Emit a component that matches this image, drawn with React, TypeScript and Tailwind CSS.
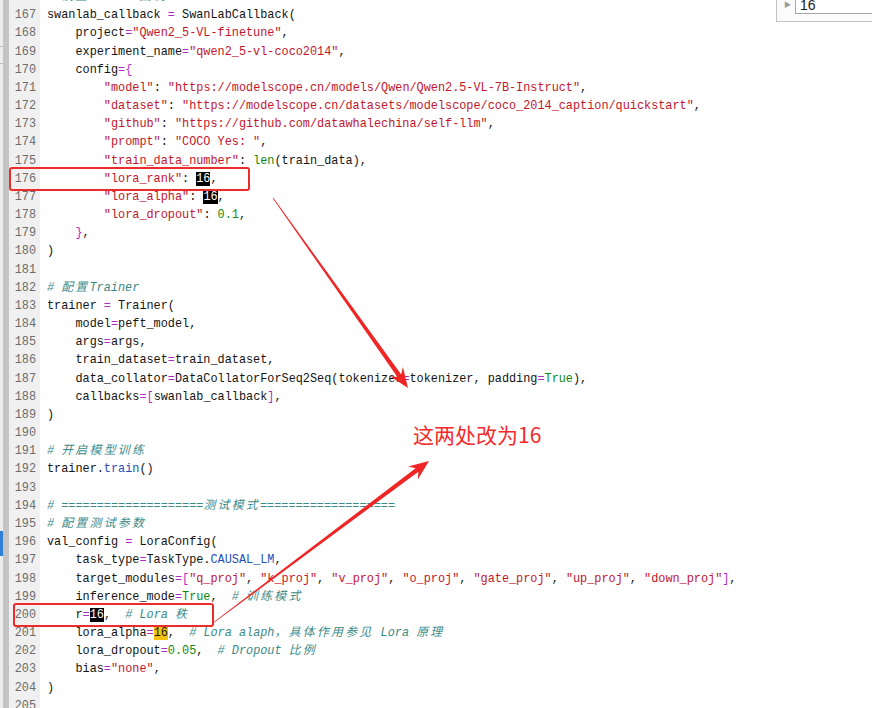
import type { ReactNode } from "react"

// token colours
const S = ({ children }: { children: ReactNode }) => <span className="text-[#c3162d]">{children}</span>
const O = ({ children }: { children: ReactNode }) => <span className="text-[#b02cc4]">{children}</span>
const N = ({ children }: { children: ReactNode }) => <span className="text-[#0b8a12]">{children}</span>
const B = ({ children }: { children: ReactNode }) => <span className="text-[#1f4fb8]">{children}</span>
const C = ({ children }: { children: ReactNode }) => <span className="italic text-[#3a8a8a]">{children}</span>
const Z = ({ children }: { children: ReactNode }) => <span className="tracking-[2.3px]">{children}</span>
const Sel = ({ children }: { children: ReactNode }) => <span className="bg-black text-white">{children}</span>
const Hi = ({ children }: { children: ReactNode }) => <span className="bg-[#f4c20d] text-[#1b1b1b]">{children}</span>

const lines: [number, ReactNode][] = [
  [166, <C># <Z>设置</Z>SwanLab<Z>回调</Z></C>],
  [167, <>swanlab_callback <O>=</O> SwanLabCallback(</>],
  [168, <>    project<O>=</O><S>"Qwen2_5-VL-finetune"</S>,</>],
  [169, <>    experiment_name<O>=</O><S>"qwen2_5-vl-coco2014"</S>,</>],
  [170, <>    config<O>={"{"}</O></>],
  [171, <>        <S>"model"</S>: <S>"https://modelscope.cn/models/Qwen/Qwen2.5-VL-7B-Instruct"</S>,</>],
  [172, <>        <S>"dataset"</S>: <S>"https://modelscope.cn/datasets/modelscope/coco_2014_caption/quickstart"</S>,</>],
  [173, <>        <S>"github"</S>: <S>"https://github.com/datawhalechina/self-llm"</S>,</>],
  [174, <>        <S>"prompt"</S>: <S>"COCO Yes: "</S>,</>],
  [175, <>        <S>"train_data_number"</S>: <N>len</N>(train_data),</>],
  [176, <>        <S>"lora_rank"</S>: <Sel>16</Sel>,</>],
  [177, <>        <S>"lora_alpha"</S>: <Sel>16</Sel>,</>],
  [178, <>        <S>"lora_dropout"</S>: <N>0.1</N>,</>],
  [179, <>    <O>{"}"}</O>,</>],
  [180, <>)</>],
  [181, <></>],
  [182, <C># <Z>配置</Z>Trainer</C>],
  [183, <>trainer <O>=</O> Trainer(</>],
  [184, <>    model<O>=</O>peft_model,</>],
  [185, <>    args<O>=</O>args,</>],
  [186, <>    train_dataset<O>=</O>train_dataset,</>],
  [187, <>    data_collator<O>=</O>DataCollatorForSeq2Seq(tokenizer<O>=</O>tokenizer, padding<O>=</O><N>True</N>),</>],
  [188, <>    callbacks<O>=[</O>swanlab_callback<O>]</O>,</>],
  [189, <>)</>],
  [190, <></>],
  [191, <C># <Z>开启模型训练</Z></C>],
  [192, <>trainer.<B>train</B>()</>],
  [193, <></>],
  [194, <C># ====================<Z>测试模式</Z>===================</C>],
  [195, <C># <Z>配置测试参数</Z></C>],
  [196, <>val_config <O>=</O> LoraConfig(</>],
  [197, <>    task_type<O>=</O>TaskType.<B>CAUSAL_LM</B>,</>],
  [198, <>    target_modules<O>=[</O><S>"q_proj"</S>, <S>"k_proj"</S>, <S>"v_proj"</S>, <S>"o_proj"</S>, <S>"gate_proj"</S>, <S>"up_proj"</S>, <S>"down_proj"</S><O>]</O>,</>],
  [199, <>    inference_mode<O>=</O><N>True</N>,  <C># <Z>训练模式</Z></C></>],
  [200, <>    r<O>=</O><Sel>16</Sel>,  <C># Lora <Z>秩</Z></C></>],
  [201, <>    lora_alpha<O>=</O><Hi>16</Hi>,  <C># Lora alaph<Z>，具体作用参见</Z> Lora <Z>原理</Z></C></>],
  [202, <>    lora_dropout<O>=</O><N>0.05</N>,  <C># Dropout <Z>比例</Z></C></>],
  [203, <>    bias<O>=</O><S>"none"</S>,</>],
  [204, <>)</>],
  [205, <></>],
]

function arrowPoints(x1: number, y1: number, x2: number, y2: number) {
  const dx = x2 - x1
  const dy = y2 - y1
  const len = Math.hypot(dx, dy)
  const ux = dx / len
  const uy = dy / len
  const nx = -uy
  const ny = ux
  const h = 18
  const bx = x2 - ux * h
  const by = y2 - uy * h
  const p = (x: number, y: number) => `${x.toFixed(1)},${y.toFixed(1)}`
  return [
    p(x1 + nx * 0.4, y1 + ny * 0.4),
    p(bx + ux * 3 + nx * 2.3, by + uy * 3 + ny * 2.3),
    p(bx - ux * 2 + nx * 8, by - uy * 2 + ny * 8),
    p(x2, y2),
    p(bx - ux * 2 - nx * 8, by - uy * 2 - ny * 8),
    p(bx + ux * 3 - nx * 2.3, by + uy * 3 - ny * 2.3),
    p(x1 - nx * 0.4, y1 - ny * 0.4),
  ].join(" ")
}

export default function App() {
  return (
    <div className="relative w-[872px] h-[708px] overflow-hidden bg-white font-['Liberation_Mono','Noto_Sans_CJK_SC',monospace] text-[11.85px] text-[#141414]">
      <div className="flex h-full">
        {/* left window edge */}
        <div className="relative w-[3px] h-full bg-[#ececec]">
          <div className="absolute left-0 top-[46px] w-[3px] h-px bg-[#bdbdbd]" />
          <div className="absolute left-0 top-[63px] w-[3px] h-px bg-[#bdbdbd]" />
          <div className="absolute left-0 top-[531px] w-[3px] h-[25px] bg-[#2f7fd6]" />
        </div>
        <div className="w-[6px] h-full bg-[#c4c4c4]" />
        {/* line numbers */}
        <div className="w-[31px] h-full bg-[#f0f0f0] text-[#6c6c6c] text-right pr-[4px]">
          <div className="-mt-[12px]">
            {lines.map(([n]) => (
              <div key={n} className="h-[18.18px] leading-[18.18px]">{n}</div>
            ))}
          </div>
        </div>
        {/* code */}
        <div className="flex-1 pl-[7px] whitespace-pre">
          <div className="-mt-[12px]">
            {lines.map(([n, c]) => (
              <div key={n} className="h-[18.18px] leading-[18.18px]">{c}</div>
            ))}
          </div>
        </div>
      </div>

      {/* find box, top right */}
      <div className="absolute left-[776px] -top-[2px] w-[110px] h-[24px] border border-[#c2c2c2] bg-[#fbfbfb]">
        <span className="absolute left-[7px] top-[1px] text-[7px] text-[#9a9a9a]">▶</span>
        <div className="absolute left-[18px] -top-[2px] w-[90px] h-[17px] border border-[#a8a8a8] bg-white pl-[4px] font-['Liberation_Sans',sans-serif] text-[14px] leading-[14px] text-[#1a1a1a]">
          16
        </div>
      </div>

      {/* annotations */}
      <div className="absolute left-[9px] top-[167px] w-[241px] h-[24px] rounded-[3px] border-2 border-[#ec2b2b]" />
      <div className="absolute left-[13px] top-[603px] w-[201px] h-[24px] rounded-[3px] border-2 border-[#ec2b2b]" />
      <svg className="absolute left-0 top-0" width="872" height="708">
        <polygon points={arrowPoints(273, 198, 408, 388)} fill="#f02626" />
        <polygon points={arrowPoints(213, 623, 429, 461)} fill="#f02626" />
      </svg>
      <div className="absolute left-[413px] top-[424px] font-['Noto_Sans_CJK_SC',sans-serif] text-[21px] leading-none text-[#f42a2a]">
        这两处改为16
      </div>
    </div>
  )
}
